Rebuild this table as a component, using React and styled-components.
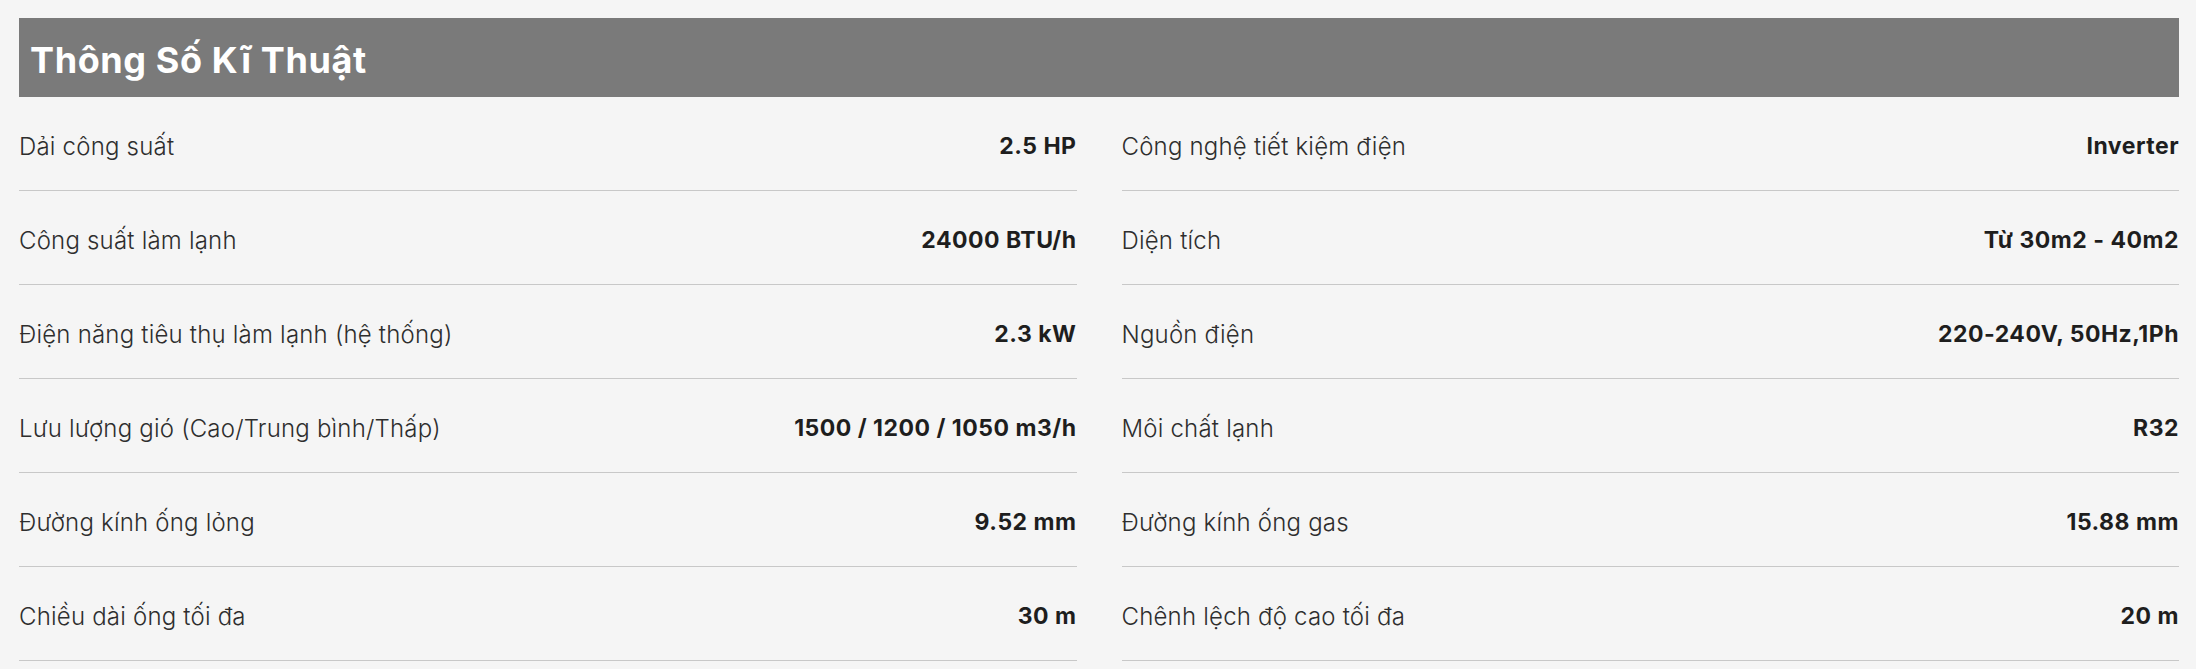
import React from "react";
import styled, { createGlobalStyle } from "styled-components";

const GlobalStyle = createGlobalStyle`
  html, body {
    margin: 0;
    padding: 0;
    background: #f5f5f5;
  }
  body {
    font-family: "Inter", "Lato", "Noto Sans", sans-serif;
  }
`;

const specs = [
  ["Dải công suất", "2.5 HP"],
  ["Công nghệ tiết kiệm điện", "Inverter"],
  ["Công suất làm lạnh", "24000 BTU/h"],
  ["Diện tích", "Từ 30m2 - 40m2"],
  ["Điện năng tiêu thụ làm lạnh (hệ thống)", "2.3 kW"],
  ["Nguồn điện", "220-240V, 50Hz,1Ph"],
  ["Lưu lượng gió (Cao/Trung bình/Thấp)", "1500 / 1200 / 1050 m3/h"],
  ["Môi chất lạnh", "R32"],
  ["Đường kính ống lỏng", "9.52 mm"],
  ["Đường kính ống gas", "15.88 mm"],
  ["Chiều dài ống tối đa", "30 m"],
  ["Chênh lệch độ cao tối đa", "20 m"],
];

export default function App() {
  return (
    <>
      <GlobalStyle />
      <Section>
        <Header>
          <Title>Thông Số Kĩ Thuật</Title>
        </Header>
        <Grid>
          {specs.map(([label, value]) => (
            <Row key={label}>
              <Label>{label}</Label>
              <Value>{value}</Value>
            </Row>
          ))}
        </Grid>
      </Section>
    </>
  );
}

const Section = styled.section`
  padding: 18px 17px 0 19px;
  background: #f5f5f5;
  min-height: 669px;
  box-sizing: border-box;
`;

const Header = styled.div`
  background: #7a7a7a;
  height: 79px;
  display: flex;
  align-items: center;
  padding-left: 11px;
`;

const Title = styled.h2`
  margin: 0;
  color: #ffffff;
  font-size: 36px;
  font-weight: 700;
  letter-spacing: 0.6px;
  line-height: 1;
  padding-top: 4px;
`;

const Grid = styled.div`
  display: grid;
  grid-template-columns: 1fr 1fr;
  column-gap: 45px;
`;

const Row = styled.div`
  height: 94px;
  border-bottom: 1px solid #c8c8c8;
  display: flex;
  align-items: center;
  justify-content: space-between;
  padding-top: 5px;
  box-sizing: border-box;
`;

const Label = styled.span`
  font-size: 24px;
  font-weight: 300;
  letter-spacing: 0.2px;
  color: #2e2e2e;
`;

const Value = styled.span`
  font-size: 23px;
  font-weight: 700;
  letter-spacing: 0.5px;
  color: #1e1e1e;
`;
